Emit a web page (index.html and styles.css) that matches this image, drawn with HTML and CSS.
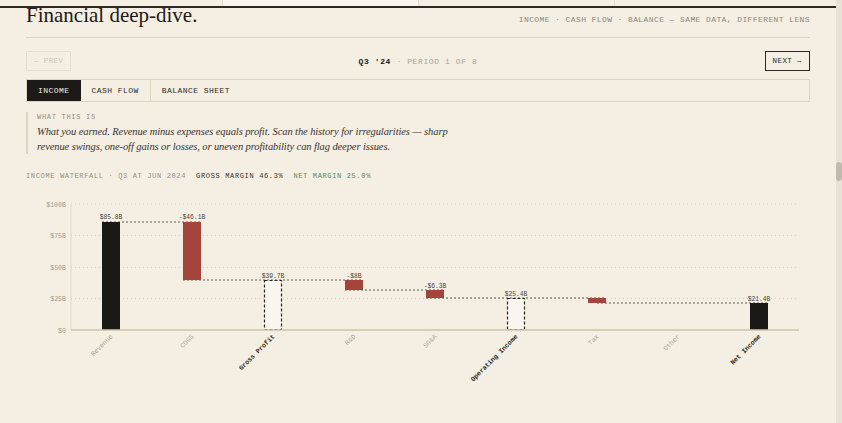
FILE: index.html
```html
<!DOCTYPE html>
<html>
  <head>
    <link rel="stylesheet" href="styles.css">
  </head>

  <body>
    <div class="window">
      <div class="page">

        <div class="topbar">
          <div class="cell"></div>
          <div class="cell cell-active"></div>
          <div class="cell"></div>
          <div class="cell"></div>
        </div>

        <div class="content">
          <header class="head">
            <h1>Financial deep-dive.</h1>
            <p class="kicker">INCOME · CASH FLOW · BALANCE — SAME DATA, DIFFERENT LENS</p>
          </header>

          <div class="period">
            <button class="btn btn-off">← PREV</button>
            <div class="period-label"><b>Q3 '24</b> · PERIOD 1 OF 8</div>
            <button class="btn">NEXT →</button>
          </div>

          <nav class="tabs">
            <span class="tab tab-on">INCOME</span>
            <span class="tab">CASH FLOW</span>
            <span class="tab tab-last">BALANCE SHEET</span>
          </nav>

          <div class="note">
            <div class="note-label">WHAT THIS IS</div>
            <p>What you earned. Revenue minus expenses equals profit. Scan the history for irregularities — sharp revenue swings, one-off gains or losses, or uneven profitability can flag deeper issues.</p>
          </div>

          <div class="chart-head">
            <span class="muted">INCOME WATERFALL · Q3 AT JUN 2024</span>
            <span>GROSS MARGIN 46.3%</span>
            <span class="good">NET MARGIN 25.0%</span>
          </div>

          <svg class="chart" width="784" height="233" viewBox="26 190 784 233">
            <g class="grid">
              <line x1="71" y1="204" x2="799" y2="204"/>
              <line x1="71" y1="235.5" x2="799" y2="235.5"/>
              <line x1="71" y1="267.5" x2="799" y2="267.5"/>
              <line x1="71" y1="298.5" x2="799" y2="298.5"/>
            </g>
            <line class="yaxis" x1="71" y1="204" x2="71" y2="330"/>
            <g class="ylabels">
              <text x="66" y="206.5">$100B</text>
              <text x="66" y="238">$75B</text>
              <text x="66" y="270">$50B</text>
              <text x="66" y="301">$25B</text>
              <text x="66" y="332.5">$0</text>
            </g>

            <g class="links">
              <line x1="102" y1="222" x2="201" y2="222"/>
              <line x1="183" y1="280" x2="363" y2="280"/>
              <line x1="345" y1="290" x2="444" y2="290"/>
              <line x1="426" y1="298" x2="606" y2="298"/>
              <line x1="597" y1="303" x2="768" y2="303"/>
            </g>

            <rect class="bar-total" x="102" y="222" width="18" height="108"/>
            <rect class="bar-neg" x="183" y="222" width="18" height="58"/>
            <rect class="bar-sub" x="264.5" y="280.5" width="17" height="49"/>
            <rect class="bar-neg" x="345" y="280" width="18" height="10"/>
            <rect class="bar-neg" x="426" y="290" width="18" height="8"/>
            <rect class="bar-sub" x="507.5" y="298.5" width="17" height="31"/>
            <rect class="bar-neg" x="588" y="298" width="18" height="5"/>
            <rect class="bar-total" x="750" y="303" width="18" height="27"/>

            <g class="vlabels">
              <text x="111" y="219">$85.8B</text>
              <text x="192" y="219">-$46.1B</text>
              <text x="273" y="278">$39.7B</text>
              <text x="354" y="277.5">-$8B</text>
              <text x="435" y="288">-$6.3B</text>
              <text x="516" y="295.5">$25.4B</text>
              <text x="759" y="301">$21.4B</text>
            </g>

            <line class="base" x1="71" y1="330" x2="799" y2="330"/>

            <g class="xlabels">
              <text transform="translate(113 337) rotate(-45)">Revenue</text>
              <text transform="translate(194 337) rotate(-45)">COGS</text>
              <text class="strong" transform="translate(275 337) rotate(-45)">Gross Profit</text>
              <text transform="translate(356 337) rotate(-45)">R&amp;D</text>
              <text transform="translate(437 337) rotate(-45)">SG&amp;A</text>
              <text class="strong" transform="translate(518 337) rotate(-45)">Operating Income</text>
              <text transform="translate(599 337) rotate(-45)">Tax</text>
              <text transform="translate(680 337) rotate(-45)">Other</text>
              <text class="strong" transform="translate(761 337) rotate(-45)">Net Income</text>
            </g>
          </svg>
        </div>

      </div>
      <div class="scrollbar"><div class="thumb"></div></div>
    </div>
  </body>
</html>
```

FILE: styles.css
```css
html, body {
  margin: 0;
  height: 100%;
  overflow: hidden;
  background: #f4eee3;
}

.window {
  display: flex;
  height: 423px;
}

.page {
  flex: 1;
  overflow: hidden;
}

.scrollbar {
  width: 6px;
  background: #e8e2d6;
}

.thumb {
  margin-top: 162px;
  height: 19px;
  border-radius: 3px;
  background: #c0baae;
}

.topbar {
  display: grid;
  grid-template-columns: repeat(4, 196px);
  padding: 0 26px;
  height: 6px;
  border-bottom: 2px solid #2d2a25;
}

.cell {
  border-left: 1px solid #e4ddcf;
}

.cell:first-child {
  border-left: none;
}

.cell-active {
  background: #faf6ef;
}

.content {
  padding: 0 26px;
}

.head {
  display: flex;
  justify-content: space-between;
  align-items: baseline;
  padding-bottom: 13px;
  border-bottom: 1px solid #dcd3c1;
}

h1 {
  margin: 0;
  font-family: "Liberation Serif", serif;
  font-weight: normal;
  font-size: 21px;
  line-height: 14px;
  color: #1d1a16;
}

.kicker {
  margin: 0;
  font-family: "Liberation Mono", monospace;
  font-size: 8px;
  letter-spacing: 0.4px;
  color: #8e887d;
}

.period {
  display: flex;
  justify-content: space-between;
  align-items: center;
  margin-top: 13px;
}

.btn {
  height: 20px;
  padding: 0 7px;
  border: 1px solid #2d2a25;
  background: transparent;
  font-family: "Liberation Mono", monospace;
  font-size: 7.5px;
  letter-spacing: 0.4px;
  color: #2d2a25;
}

.btn-off {
  border-color: #e6dfd1;
  color: #cbc4b6;
}

.period-label {
  font-family: "Liberation Mono", monospace;
  font-size: 8px;
  letter-spacing: 0.6px;
  color: #aaa396;
}

.period-label b {
  color: #1d1a16;
}

.tabs {
  display: flex;
  margin-top: 8px;
  border: 1px solid #dcd3c1;
}

.tab {
  padding: 0 11px;
  line-height: 21px;
  font-family: "Liberation Mono", monospace;
  font-size: 8px;
  letter-spacing: 0.45px;
  color: #2d2a25;
  border-right: 1px solid #dcd3c1;
}

.tab-on {
  background: #1c1a17;
  color: #f4eee3;
  border-right: none;
}

.tab-last {
  border-right: none;
}

.note {
  margin-top: 10px;
  padding-left: 9px;
  border-left: 2px solid #ddd4c2;
  width: 420px;
}

.note-label {
  font-family: "Liberation Mono", monospace;
  font-size: 7px;
  line-height: 10px;
  letter-spacing: 0.7px;
  color: #958f84;
}

.note p {
  margin: 2px 0 0;
  font-family: "Liberation Serif", serif;
  font-style: italic;
  font-size: 10.5px;
  letter-spacing: -0.1px;
  line-height: 15px;
  color: #3a352f;
}

.chart-head {
  display: flex;
  gap: 10px;
  margin-top: 17px;
  font-family: "Liberation Mono", monospace;
  font-size: 7px;
  line-height: 10px;
  letter-spacing: 0.65px;
  color: #3a352f;
}

.muted {
  color: #958f84;
}

.good {
  color: #5c8c62;
}

.chart {
  display: block;
  margin-top: 9px;
  font-family: "Liberation Mono", monospace;
}

.grid line {
  stroke: #d9d1be;
  stroke-width: 1;
  stroke-dasharray: 1 3;
}

.yaxis {
  stroke: #e2dac9;
  stroke-width: 1;
}

.base {
  stroke: #cdc4aa;
  stroke-width: 1.5;
}

.ylabels text {
  font-size: 6.6px;
  fill: #a39c8f;
  text-anchor: end;
}

.links line {
  stroke: #4f4a42;
  stroke-width: 0.9;
  stroke-dasharray: 2 2;
}

.bar-total {
  fill: #1b1916;
}

.bar-neg {
  fill: #a4443a;
}

.bar-sub {
  fill: #faf7f0;
  stroke: #2a2622;
  stroke-width: 1.2;
  stroke-dasharray: 3 2;
}

.vlabels text {
  font-size: 6.3px;
  fill: #4a453e;
  text-anchor: middle;
}

.xlabels text {
  font-size: 6.6px;
  fill: #aaa396;
  text-anchor: end;
}

.xlabels .strong {
  fill: #2a2622;
  font-weight: bold;
}
```
